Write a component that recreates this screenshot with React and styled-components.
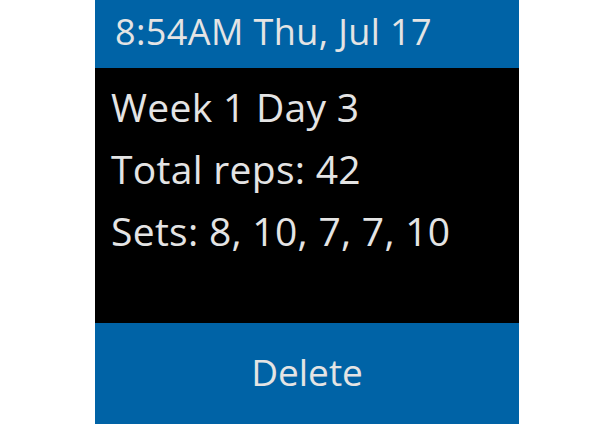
import React from "react";
import styled, { createGlobalStyle } from "styled-components";

const Global = createGlobalStyle`
  html, body { margin: 0; padding: 0; background: #ffffff; }
  body { font-family: "Open Sans", "Noto Sans", sans-serif; }
`;

const Page = styled.div`
  display: flex;
  padding-left: 95px;
  width: 615px;
  height: 424px;
  box-sizing: border-box;
`;

const Screen = styled.div`
  width: 424px;
  height: 424px;
  display: flex;
  flex-direction: column;
  background: #000;
  color: #e4e4e4;
`;

const Header = styled.div`
  height: 68px;
  flex: none;
  background: #0063a6;
  display: flex;
  align-items: center;
  padding: 0 0 6px 20px;
  font-size: 36px;
  letter-spacing: 0.4px;
  box-sizing: border-box;
  white-space: nowrap;
`;

const Body = styled.div`
  flex: 1;
  padding: 8px 0 0 16px;
  display: flex;
  flex-direction: column;
`;

const Line = styled.div`
  font-size: 39px;
  line-height: 62px;
  letter-spacing: 0.3px;
  white-space: nowrap;
`;

const Footer = styled.button`
  height: 101px;
  flex: none;
  border: none;
  background: #0063a6;
  color: #e4e4e4;
  font-family: inherit;
  font-size: 37px;
  display: flex;
  align-items: center;
  justify-content: center;
  padding: 0 0 4px 0;
  box-sizing: border-box;
`;

export default function App() {
  return (
    <>
      <Global />
      <Page>
        <Screen>
          <Header>8:54AM Thu, Jul 17</Header>
          <Body>
            <Line>Week 1 Day 3</Line>
            <Line>Total reps: 42</Line>
            <Line>Sets: 8, 10, 7, 7, 10</Line>
          </Body>
          <Footer>Delete</Footer>
        </Screen>
      </Page>
    </>
  );
}
